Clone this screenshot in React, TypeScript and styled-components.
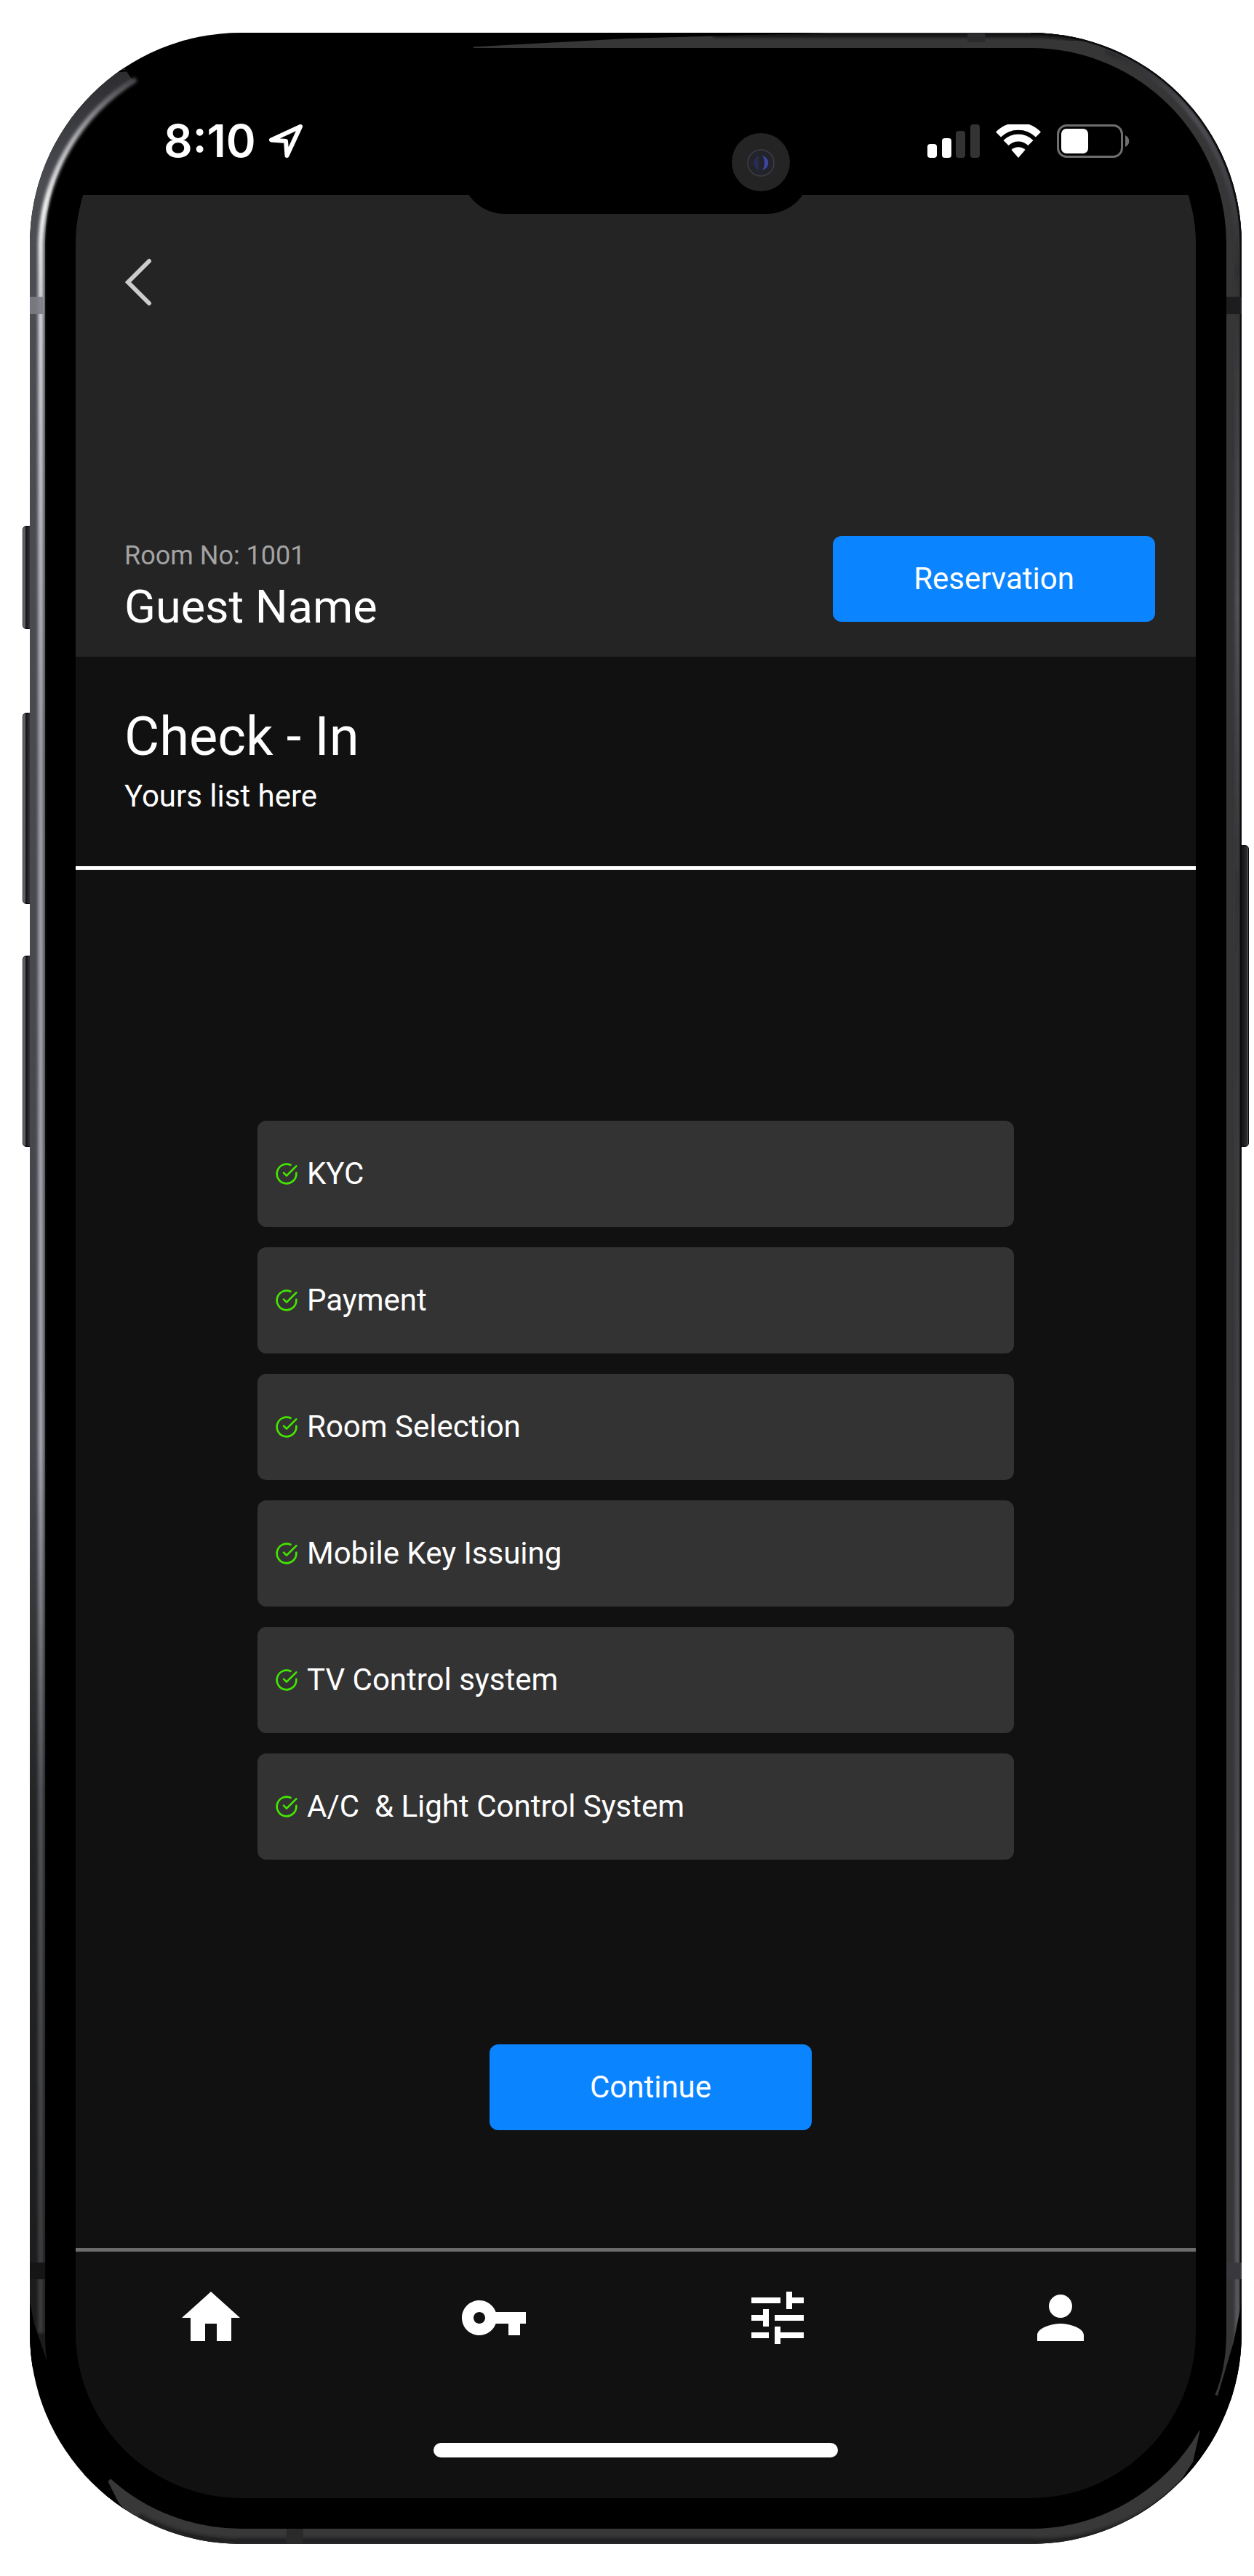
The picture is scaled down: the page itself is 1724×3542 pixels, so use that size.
import React from "react";
import styled, { createGlobalStyle } from "styled-components";
import { MdHome, MdPerson, MdTune, MdVpnKey } from "react-icons/md";
import { FiCheckCircle } from "react-icons/fi";

const GlobalStyle = createGlobalStyle`
  *, *::before, *::after { box-sizing: border-box; }
  body {
    margin: 0;
    background: #ffffff;
    font-family: Roboto, "Liberation Sans", sans-serif;
    color: #ffffff;
  }
  h1, h2, p, ul { margin: 0; padding: 0; font-weight: 400; }
`;

const Page = styled.div`
  padding: 45px 17px 44px 41px;
`;

const Device = styled.div`
  position: relative;
`;

const SideKey = styled.span<{ $side: "left" | "right"; $top: number; $length: number }>`
  position: absolute;
  ${(p) => p.$side}: -10px;
  top: ${(p) => p.$top}px;
  width: 14px;
  height: ${(p) => p.$length}px;
  border-radius: ${(p) => (p.$side === "left" ? "5px 0 0 5px" : "0 5px 5px 0")};
  border: 1px solid #0b0b0c;
  background: ${(p) =>
    p.$side === "left"
      ? "linear-gradient(90deg, #77787f 0, #5c5d62 2px, #141416 4px, #303134 8px)"
      : "linear-gradient(270deg, #56575c 0, #2c2c2e 2px, #1c1c1e 6px, #141415 10px)"};
`;

const Casing = styled.div`
  position: relative;
  padding: 63px;
  border-radius: 290px;
  overflow: hidden;
  background: #000000;
`;

const CasingMetal = styled.svg`
  position: absolute;
  inset: 0;
  width: 100%;
  height: 100%;
`;

const Screen = styled.main`
  position: relative;
  display: flex;
  flex-direction: column;
  border-radius: 228px;
  overflow: hidden;
  background: #111111;
`;

const StatusBar = styled.div`
  position: relative;
  z-index: 1;
  display: flex;
  align-items: center;
  justify-content: space-between;
  height: 160px;
  padding: 12px 91px 0 121px;
  background: #000000;
`;

const StatusGroup = styled.div<{ $gap: number }>`
  display: flex;
  align-items: center;
  gap: ${(p) => p.$gap}px;
`;

const Clock = styled.time`
  font: 600 62px/62px Inter, sans-serif;
`;

const Notch = styled.div`
  position: absolute;
  top: 0;
  left: 50%;
  width: 480px;
  height: 186px;
  margin-left: -240px;
  border-radius: 0 0 60px 60px;
  background: #000000;
`;

const Camera = styled.svg`
  position: absolute;
  top: 75px;
  right: 28px;
  width: 80px;
  height: 80px;
`;

const Header = styled.header`
  display: flex;
  flex-direction: column;
  align-items: flex-start;
  justify-content: space-between;
  min-height: 635px;
  padding: 87px 56px 32px 67px;
  background: #242424;
`;

const BackButton = styled.button`
  display: block;
  width: 40px;
  height: 66px;
  padding: 0;
  border: 0;
  background: none;
  color: #cccccc;
`;

const GuestRow = styled.div`
  display: flex;
  align-items: flex-start;
  justify-content: space-between;
  width: 100%;
`;

const Guest = styled.div`
  display: flex;
  flex-direction: column;
  gap: 14px;
  padding-top: 6px;
`;

const RoomNumber = styled.p`
  font-size: 36px;
  line-height: 42px;
  color: #a3a3a3;
`;

const GuestName = styled.p`
  font-size: 63px;
  line-height: 72px;
`;

const PrimaryButton = styled.button`
  width: 443px;
  height: 118px;
  padding: 0;
  border: 0;
  border-radius: 12px;
  background: #0a84ff;
  color: #ffffff;
  font: 400 42px/50px Roboto, "Liberation Sans", sans-serif;
`;

const Intro = styled.section`
  display: flex;
  flex-direction: column;
  gap: 13px;
  padding: 66px 67px 71px;
  border-bottom: 5px solid #ffffff;
`;

const Title = styled.h1`
  font-size: 74px;
  line-height: 88px;
`;

const Subtitle = styled.p`
  font-size: 42px;
  line-height: 50px;
`;

const Content = styled.section`
  display: flex;
  flex-direction: column;
  align-items: center;
  gap: 254px;
  padding: 345px 66px 162px;
`;

const StepList = styled.ul`
  display: flex;
  flex-direction: column;
  gap: 28px;
  width: 100%;
  max-width: 1040px;
  list-style: none;
`;

const Step = styled.li`
  display: flex;
  align-items: center;
  gap: 12px;
  height: 146px;
  padding: 0 24px;
  border-radius: 12px;
  background: #333333;
  font-size: 42px;
  line-height: 50px;
  white-space: pre;

  svg {
    flex: none;
    width: 32px;
    height: 32px;
    color: #43e600;
  }
`;

const Actions = styled.div`
  padding-left: 41px;
`;

const TabBar = styled.nav`
  display: flex;
  justify-content: space-between;
  padding: 43px 138px 0;
  border-top: 5px solid #6c6c6c;
`;

const Tab = styled.a`
  display: block;
  height: 96px;
  color: #ffffff;

  svg {
    display: block;
    width: 96px;
    height: 96px;
  }
`;

const HomeIndicator = styled.div`
  width: 556px;
  height: 20px;
  margin: 124px auto 56px;
  border-radius: 10px;
  background: #ffffff;
`;

const steps = [
  "KYC",
  "Payment",
  "Room Selection",
  "Mobile Key Issuing",
  "TV Control system",
  "A/C  & Light Control System",
];

const tabs = [
  { label: "Home", Icon: MdHome },
  { label: "Room key", Icon: MdVpnKey },
  { label: "Controls", Icon: MdTune },
  { label: "Profile", Icon: MdPerson },
];

function Metal() {
  return (
    <CasingMetal viewBox="0 0 1667 3453" preserveAspectRatio="none" fill="none" aria-hidden="true">
      <defs>
        <linearGradient id="leftBase" gradientUnits="userSpaceOnUse" x1="0" y1="50" x2="0" y2="3210">
          <stop offset="0" stopColor="#2c2c2f" />
          <stop offset="0.05" stopColor="#4c4d53" />
          <stop offset="0.6" stopColor="#45464c" />
          <stop offset="0.75" stopColor="#242527" />
          <stop offset="1" stopColor="#1b1b1c" />
        </linearGradient>
        <linearGradient id="leftShine" gradientUnits="userSpaceOnUse" x1="0" y1="50" x2="0" y2="3210">
          <stop offset="0" stopColor="#3c3c40" />
          <stop offset="0.03" stopColor="#b4b4ba" />
          <stop offset="0.06" stopColor="#ffffff" />
          <stop offset="0.1" stopColor="#dcdce2" />
          <stop offset="0.3" stopColor="#a2a3aa" />
          <stop offset="0.6" stopColor="#a9aab4" />
          <stop offset="0.75" stopColor="#55565a" />
          <stop offset="1" stopColor="#3a3a3b" />
        </linearGradient>
        <linearGradient id="rightShine" gradientUnits="userSpaceOnUse" x1="0" y1="0" x2="0" y2="3250">
          <stop offset="0" stopColor="#1a1a1c" />
          <stop offset="0.035" stopColor="#55555d" />
          <stop offset="0.1" stopColor="#2e2e31" />
          <stop offset="0.24" stopColor="#5a5a64" />
          <stop offset="0.36" stopColor="#333338" />
          <stop offset="0.9" stopColor="#5c5d66" />
          <stop offset="1" stopColor="#66666f" />
        </linearGradient>
        <filter id="soft" x="-5%" y="-5%" width="110%" height="110%">
          <feGaussianBlur stdDeviation="2" />
        </filter>
      </defs>

      <path d="M135 56A279.500 279.500 0 0 0 10.500 290V3163Q10.500 3190 14 3208" stroke="url(#leftBase)" strokeWidth="21" />
      <path d="M146 64A275 275 0 0 0 15 290V3163" stroke="url(#leftShine)" strokeWidth="7" filter="url(#soft)" />
      <path d="M90 51H180V66L168 51L110 55L96 60Z" fill="#000000" />
      <path d="M0 3120L6 3150L27 3212L0 3212Z" fill="#000000" />

      <path d="M610 10.500H1377A279.500 279.500 0 0 1 1656.500 290V3163Q1656 3215 1640 3252" stroke="#363637" strokeWidth="21" />
      <path d="M940 2H1377A288 288 0 0 1 1450 10" stroke="#0c0c0d" strokeWidth="7" filter="url(#soft)" />
      <path d="M1480 26A284 284 0 0 1 1661 290V3163Q1660 3210 1644 3250" stroke="url(#rightShine)" strokeWidth="5" filter="url(#soft)" />
      <path d="M1377 1A289 289 0 0 1 1666 290V3163" stroke="#0c0c0d" strokeWidth="3" />
      <path d="M560 0H1100L820 8L600 20V24H560Z" fill="#000000" />
      <path d="M1667 3120L1656 3175L1632 3256H1667Z" fill="#000000" />

      <path d="M104 3371A279.500 279.500 0 0 0 290 3442.500H1377A279.500 279.500 0 0 0 1618 3302" stroke="#383838" strokeWidth="21" />
      <path d="M150 3415A287 287 0 0 0 290 3449H1377A287 287 0 0 0 1590 3368" stroke="#1b1b1e" strokeWidth="7" filter="url(#soft)" />
      <path d="M106 3364L122 3396L146 3424L90 3424L70 3340Z" fill="#000000" />
      <path d="M1610 3296L1600 3340L1572 3384L1640 3370L1650 3290Z" fill="#000000" />

      <path d="M0 363H18V387H0Z" fill="#7c7d84" fillOpacity="0.9" />
      <path d="M1646 363H1667V387H1646Z" fill="#1d1d1f" />
      <path d="M1646 3066H1667V3089H1646Z" fill="#38383e" />
      <path d="M0 3066H21V3089H0Z" fill="#151516" />
      <path d="M1290 0H1314V13H1290Z" fill="#2b2b2e" />
      <path d="M353 3432H376V3453H353Z" fill="#2a2a2b" />
    </CasingMetal>
  );
}

function LocationArrow() {
  return (
    <svg width="50" height="50" viewBox="0 0 50 50" fill="none" aria-hidden="true">
      <path
        d="M45 5L5 23.500L25 25L26.500 45Z"
        stroke="#ffffff"
        strokeWidth="6"
        strokeLinejoin="round"
      />
    </svg>
  );
}

function Signal() {
  return (
    <svg width="72" height="46" viewBox="0 0 72 46" aria-hidden="true">
      <rect x="0" y="27" width="13" height="19" rx="4" fill="#ffffff" />
      <rect x="20" y="19" width="13" height="27" rx="4" fill="#ffffff" />
      <rect x="39" y="9" width="13" height="37" rx="4" fill="#333333" />
      <rect x="59" y="0" width="13" height="46" rx="4" fill="#333333" />
    </svg>
  );
}

function Wifi() {
  return (
    <svg width="62" height="46" viewBox="0 0 62 46" fill="none" aria-hidden="true">
      <path d="M3.500 14A39 39 0 0 1 58.500 14" stroke="#ffffff" strokeWidth="10" />
      <path d="M14 25.500A24 24 0 0 1 48 25.500" stroke="#ffffff" strokeWidth="10" />
      <path d="M31 46L21.500 35A14 14 0 0 1 40.500 35Z" fill="#ffffff" />
    </svg>
  );
}

function Battery() {
  return (
    <svg width="100" height="46" viewBox="0 0 100 46" fill="none" aria-hidden="true">
      <rect x="1.500" y="1.500" width="88" height="43" rx="12" stroke="#6e6e6e" strokeWidth="3" />
      <rect x="6" y="6" width="37" height="34" rx="7" fill="#ffffff" />
      <path d="M94 15C101 18 101 28 94 31Z" fill="#6e6e6e" />
    </svg>
  );
}

function CameraLens() {
  return (
    <Camera viewBox="0 0 80 80" fill="none" aria-hidden="true">
      <circle cx="40" cy="40" r="40" fill="#242424" />
      <circle cx="40" cy="41" r="18" fill="#22232b" stroke="#3e3e44" strokeWidth="1.500" />
      <path d="M42 31C53 34 53 48 42 51C46 45 46 37 42 31Z" fill="#3a46a0" />
      <path d="M37 31C28 35 28 47 37 51Z" fill="#272c50" />
    </Camera>
  );
}

export default function App() {
  return (
    <>
      <GlobalStyle />
      <Page>
        <Device>
          <SideKey $side="left" $top={678} $length={142} />
          <SideKey $side="left" $top={935} $length={263} />
          <SideKey $side="left" $top={1269} $length={263} />
          <SideKey $side="right" $top={1117} $length={415} />
          <Casing>
            <Metal />
            <Screen>
              <StatusBar>
                <StatusGroup $gap={16}>
                  <Clock>8:10</Clock>
                  <LocationArrow />
                </StatusGroup>
                <Notch>
                  <CameraLens />
                </Notch>
                <StatusGroup $gap={22}>
                  <Signal />
                  <Wifi />
                  <Battery />
                </StatusGroup>
              </StatusBar>

              <Header>
                <BackButton type="button" aria-label="Back">
                  <svg width="40" height="66" viewBox="0 0 40 66" fill="none" aria-hidden="true">
                    <path d="M34 4L5 33L34 62" stroke="currentColor" strokeWidth="6" strokeLinecap="round" />
                  </svg>
                </BackButton>
                <GuestRow>
                  <Guest>
                    <RoomNumber>Room No: 1001</RoomNumber>
                    <GuestName>Guest Name</GuestName>
                  </Guest>
                  <PrimaryButton type="button">Reservation</PrimaryButton>
                </GuestRow>
              </Header>

              <Intro>
                <Title>Check - In</Title>
                <Subtitle>Yours list here</Subtitle>
              </Intro>

              <Content>
                <StepList>
                  {steps.map((step) => (
                    <Step key={step}>
                      <FiCheckCircle aria-hidden="true" />
                      {step}
                    </Step>
                  ))}
                </StepList>
                <Actions>
                  <PrimaryButton type="button">Continue</PrimaryButton>
                </Actions>
              </Content>

              <TabBar>
                {tabs.map(({ label, Icon }) => (
                  <Tab key={label} href="#" aria-label={label}>
                    <Icon aria-hidden="true" />
                  </Tab>
                ))}
              </TabBar>
              <HomeIndicator />
            </Screen>
          </Casing>
        </Device>
      </Page>
    </>
  );
}
